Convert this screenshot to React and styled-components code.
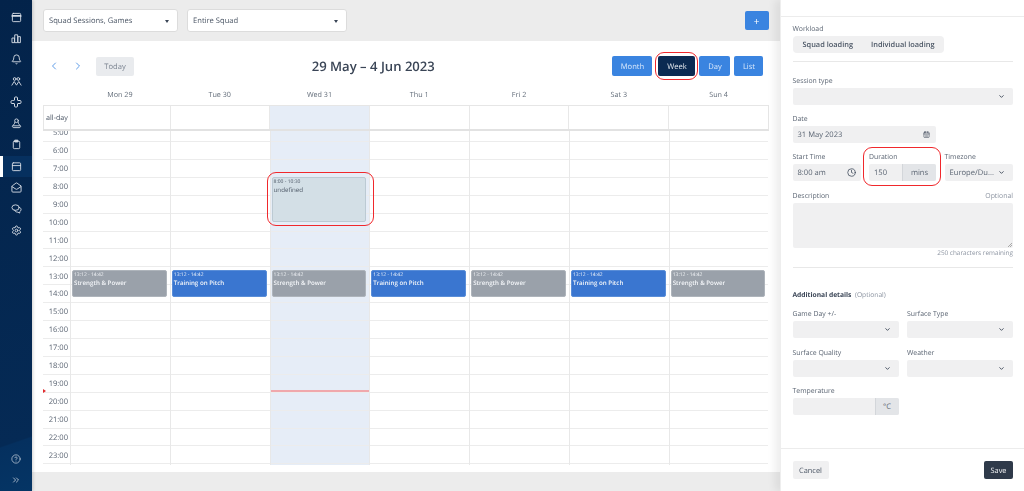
import React from "react";
import styled, { createGlobalStyle } from "styled-components";
import {
  Bell, Cross, MailOpen,
  Settings, CircleHelp, ChevronsRight, ChevronLeft, ChevronRight, ChevronDown, Clock, CalendarDays,
} from "lucide-react";

const Global = createGlobalStyle`
  html, body { margin: 0; padding: 0; height: 100%; background: #ececec; overflow: hidden; }
  body { font-family: "Open Sans", "Liberation Sans", sans-serif; color: #3a4556; text-rendering: geometricPrecision; }
  * { box-sizing: border-box; }
`;

const Page = styled.div`
  display: flex;
  width: 1024px;
  height: 491px;
  overflow: hidden;
  filter: blur(0.35px);
`;

/* ---------- sidebar ---------- */
const Sidebar = styled.nav`
  position: relative;
  flex: 0 0 32px;
  display: flex;
  flex-direction: column;
  padding-top: 6.5px;
  background: linear-gradient(161deg, #03234a 0%, #052a55 89%, #05305f 89.3%, #053565 100%);
  box-shadow: 1px 0 3px rgba(0, 0, 0, 0.18);
  z-index: 3;
`;
const NavItem = styled.div`
  height: 21.3px;
  display: flex;
  align-items: center;
  justify-content: center;
  color: #d5dce5;
  background: ${(p) => (p.$active ? "#06305f" : "transparent")};
  border-left: ${(p) => (p.$active ? "3px solid #fff" : "0")};
  padding-right: ${(p) => (p.$active ? "3px" : "0")};
`;
const NavFoot = styled.div`
  margin-top: auto;
`;
const NavIcon = styled.svg.attrs({ width: 11, height: 11, viewBox: "0 0 24 24", fill: "none", stroke: "currentColor", strokeWidth: 2, strokeLinejoin: "round", strokeLinecap: "round" })``;

/* ---------- main ---------- */
const Main = styled.main`
  flex: 1;
  display: flex;
  flex-direction: column;
  min-width: 0;
`;
const TopBar = styled.div`
  height: 41px;
  flex: none;
  display: flex;
  align-items: center;
  padding: 0 11px;
  gap: 9px;
`;
const FilterSelect = styled.div`
  width: ${(p) => p.$w}px;
  height: 23px;
  background: #fff;
  border: 1px solid #dcdcdc;
  border-radius: 3px;
  display: flex;
  align-items: center;
  justify-content: space-between;
  padding: 1px 8px 0 5px;
  font-size: 7.6px;
  color: #4a5564;
`;
const Caret = styled.span`
  width: 0;
  height: 0;
  border-left: 2.5px solid transparent;
  border-right: 2.5px solid transparent;
  border-top: 3px solid #3a4556;
`;
const AddButton = styled.div`
  margin-left: auto;
  width: 24px;
  height: 19px;
  border-radius: 2px;
  background: #3a84e0;
  color: #fff;
  display: flex;
  align-items: center;
  justify-content: center;
  font-size: 10px;
`;
const Card = styled.section`
  height: 431px;
  background: #fff;
  padding: 0 11px;
  display: flex;
  flex-direction: column;
`;
const Toolbar = styled.div`
  height: 47px;
  flex: none;
  display: flex;
  justify-content: space-between;
  align-items: center;
  padding-top: 3px;
`;
const ToolLeft = styled.div`
  display: flex;
  align-items: center;
  color: #5f9de8;
  padding-left: 5px;
`;
const ArrowSlot = styled.span`
  width: 24px;
  display: flex;
`;
const TodayButton = styled.div`
  width: 38px;
  height: 19px;
  padding-top: 1px;
  background: #e9ebee;
  border-radius: 2px;
  color: #7b8491;
  font-size: 7.6px;
  display: flex;
  align-items: center;
  justify-content: center;
`;
const Title = styled.h1`
  margin: 0;
  font-size: 13.1px;
  font-weight: 600;
  color: #3a4556;
  white-space: nowrap;
`;
const Views = styled.div`
  display: flex;
  justify-content: flex-end;
  gap: 4px;
  padding-right: 5px;
`;
const ViewButton = styled.div`
  position: relative;
  height: 20px;
  padding-top: 1px;
  width: ${(p) => p.$w}px;
  margin-left: ${(p) => p.$ml || 0}px;
  border-radius: 2px;
  background: ${(p) => (p.$active ? "#0b2a52" : "#3a84e0")};
  color: ${(p) => (p.$active ? "#e6eaf0" : "#dbe9fb")};
  font-size: 7.6px;
  display: flex;
  align-items: center;
  justify-content: center;
`;
const Mark = styled.span`
  position: absolute;
  left: ${(p) => p.$l}px;
  top: ${(p) => p.$t}px;
  width: ${(p) => p.$w}px;
  height: ${(p) => p.$h}px;
  border: 1.5px solid #f0282c;
  border-radius: 9px;
  pointer-events: none;
  z-index: 2;
`;

const DayHead = styled.div`
  display: grid;
  grid-template-columns: 27px repeat(7, 1fr);
  height: 17px;
  flex: none;
  font-size: 7.2px;
  color: #626c79;
  text-align: center;
  line-height: 14px;
`;
const AllDay = styled.div`
  display: grid;
  grid-template-columns: 27px repeat(7, 1fr);
  height: 26px;
  flex: none;
  border: 1px solid #e6e6e6;
  border-left-width: 0;
  border-bottom: 2px solid #e2e2e2;
`;
const AllDayLabel = styled.div`
  font-size: 7.2px;
  color: #4a5564;
  display: flex;
  align-items: center;
  justify-content: center;
  border-left: 1px solid #e6e6e6;
`;
const AllDayCell = styled.div`
  border-left: 1px solid #e8e8e8;
  background: ${(p) => (p.$today ? "#e6edf7" : "transparent")};
`;
const TimeGrid = styled.div`
  display: grid;
  grid-template-columns: 27px repeat(7, 1fr);
  flex: none;
  overflow: hidden;
  height: 333.5px;
  position: relative;
`;
const AxisColumn = styled.div`
  display: flex;
  flex-direction: column;
`;
const AxisSlot = styled.div`
  flex: none;
  height: ${(p) => p.$h}px;
  font-size: 7.6px;
  color: #5a6472;
  padding-right: 2px;
  padding-top: ${(p) => (p.$clip ? 0 : 1.5)}px;
  padding-bottom: ${(p) => (p.$clip ? 7 : 0)}px;
  border-bottom: 1px solid #ececec;
  display: flex;
  align-items: center;
  justify-content: flex-end;
  line-height: 10px;
  overflow: hidden;
`;
const DayColumn = styled.div`
  position: relative;
  border-left: 1px solid #e8e8e8;
  background: ${(p) => (p.$today ? "#e6edf7" : "transparent")};
`;
const Slot = styled.div`
  height: ${(p) => p.$h}px;
  border-bottom: 1px solid #ececec;
`;
const EventBox = styled.div`
  position: absolute;
  left: 1px;
  right: 3px;
  top: ${(p) => p.$t}px;
  height: ${(p) => p.$h}px;
  border-radius: 2px;
  padding: 0.5px 0 0 1px;
  background: ${(p) => p.$bg};
  border: 1px solid ${(p) => p.$line};
  color: ${(p) => p.$fg};
  overflow: hidden;
`;
const EventTime = styled.div`
  font-size: 5px;
  line-height: 6px;
  font-weight: 500;
`;
const EventName = styled.div`
  font-size: 6.2px;
  line-height: 9px;
  font-weight: ${(p) => (p.$bold ? 600 : 400)};
  white-space: nowrap;
`;
const NowLine = styled.div`
  position: absolute;
  left: 0;
  right: 0;
  top: 259px;
  height: 1.5px;
  background: #f0a8ac;
`;
const NowArrow = styled.span`
  position: absolute;
  left: 0;
  top: 258px;
  width: 0;
  height: 0;
  border-top: 2px solid transparent;
  border-bottom: 2px solid transparent;
  border-left: 3px solid #e02a2e;
`;
const CardFoot = styled.div`
  flex: 1;
`;

/* ---------- drawer ---------- */
const Drawer = styled.aside`
  position: relative;
  flex: 0 0 244px;
  background: #fff;
  box-shadow: -5px 0 8px rgba(0, 0, 0, 0.07);
  display: flex;
  flex-direction: column;
  z-index: 2;
  border-left: 1px solid #eee;
`;
const DrawerTop = styled.div`
  height: 17px;
  flex: none;
  border-bottom: 1px solid #ececec;
`;
const DrawerBody = styled.div`
  flex: 1;
  padding: 0 11px 0 12px;
  position: relative;
`;
const Label = styled.div`
  font-size: 6.9px;
  line-height: 9px;
  height: 9px;
  padding-top: 1px;
  font-weight: 500;
  color: #5b6573;
  margin-top: ${(p) => p.$mt || 0}px;
  margin-bottom: 3px;
  display: flex;
  justify-content: space-between;
  white-space: nowrap;
`;
const Optional = styled.span`
  font-weight: 400;
  color: #8b93a0;
`;
const Segmented = styled.div`
  width: 151px;
  height: 17px;
  padding-top: 1px;
  background: #f0f0f1;
  border-radius: 4px;
  display: flex;
  align-items: center;
  padding-left: 10px;
  gap: 18px;
  font-size: 7.4px;
  font-weight: 600;
  color: #4a5564;
  white-space: nowrap;
`;
const Rule = styled.div`
  height: 1px;
  background: #e8e8e8;
  margin-top: ${(p) => p.$mt}px;
`;
const Field = styled.div`
  height: 17.5px;
  width: ${(p) => (p.$w ? `${p.$w}px` : "100%")};
  background: #f0f0f1;
  border-radius: 2px;
  display: flex;
  align-items: center;
  justify-content: space-between;
  padding: 1px ${(p) => p.$pr ?? 8}px 0 5px;
  font-size: 7.6px;
  color: #5b6573;
  overflow: hidden;
  white-space: nowrap;
`;
const Row = styled.div`
  display: grid;
  grid-template-columns: ${(p) => p.$cols};
  column-gap: ${(p) => p.$gap}px;
`;
const FieldCell = styled.div`
  position: relative;
`;
const Unit = styled.span`
  align-self: stretch;
  width: ${(p) => p.$w}px;
  margin-top: -1px;
  background: #e3e5e8;
  border-left: 1px solid #d3d6da;
  display: flex;
  align-items: center;
  justify-content: center;
  padding-top: 1px;
  color: #5b6573;
`;
const TextArea = styled.div`
  position: relative;
  height: 45px;
  background: #f0f0f1;
  border-radius: 2px;
`;
const Grip = styled.svg`
  position: absolute;
  right: 1px;
  bottom: 1px;
`;
const Remaining = styled.div`
  font-size: 6.4px;
  line-height: 9px;
  margin-top: 0.5px;
  color: #8b93a0;
  text-align: right;
`;
const SectionTitle = styled.div`
  font-size: 6.7px;
  line-height: 9px;
  margin-top: 21.5px;
  margin-bottom: 10px;
  font-weight: 700;
  color: #3a4556;
`;
const DrawerFoot = styled.footer`
  height: 43px;
  flex: none;
  border-top: 1px solid #ececec;
  display: flex;
  align-items: flex-start;
  justify-content: space-between;
  padding: 12px 11px 0 12px;
`;
const FootButton = styled.div`
  height: 18px;
  padding-top: 1px;
  width: ${(p) => p.$w}px;
  border-radius: 2px;
  background: ${(p) => (p.$dark ? "#2f3a4a" : "#f0f0f1")};
  color: ${(p) => (p.$dark ? "#f2f3f5" : "#4a5564")};
  font-size: 7.4px;
  font-weight: 500;
  display: flex;
  align-items: center;
  justify-content: center;
`;

const navItems = [
  <NavIcon><rect x="3" y="3" width="18" height="18" rx="2" /><path d="M3 8.500h18" strokeWidth="4" /></NavIcon>,
  <NavIcon stroke="none" fill="currentColor"><rect x="3" y="11" width="4.500" height="10" /><rect x="9" y="4" width="5.500" height="17" /><rect x="16" y="8" width="4.500" height="13" /></NavIcon>,
  <Bell size={11} strokeWidth={2} />,
  <NavIcon><circle cx="8" cy="6.500" r="3" /><circle cx="16" cy="6.500" r="3" /><path d="M2 20l5-8 5 8 5-8 5 8" /></NavIcon>,
  <Cross size={12} strokeWidth={2} />,
  <NavIcon strokeWidth="2.400"><circle cx="12" cy="6" r="4" /><path d="M8 10c0 3-1 4-4 6-2 1.500-1 5 2 5h12c3 0 4-3.500 2-5-3-2-4-3-4-6" /><path d="M5 17h14" /></NavIcon>,
  <NavIcon><rect x="5" y="5" width="14" height="16" rx="2" /><rect x="9" y="2.500" width="6" height="4" fill="currentColor" /></NavIcon>,
  <NavIcon><rect x="3" y="4" width="18" height="17" rx="2" /><path d="M3 10h18" /></NavIcon>,
  <MailOpen size={11} strokeWidth={2} />,
  <NavIcon><ellipse cx="10" cy="10" rx="8" ry="6" /><path d="M8 16c1 3 4 4 7 4l4 2v-3c2-1 3-3 3-5s-1-3-3-4" /></NavIcon>,
  <Settings size={11} strokeWidth={2} />,
];

const days = ["Mon 29", "Tue 30", "Wed 31", "Thu 1", "Fri 2", "Sat 3", "Sun 4"];
const hours = Array.from({ length: 19 }, (_, i) => i + 5);
const slotH = (h) => (h === 5 ? 11 : 17.92);
const TOP_13 = 139;

const SelectField = ({ w }) => (
  <Field $w={w}><span /><ChevronDown size={7} strokeWidth={3} color="#3a4556" /></Field>
);

export default function App() {
  return (
    <Page>
      <Global />
      <Sidebar>
        {navItems.map((n, i) => <NavItem key={i} $active={i === 7}>{n}</NavItem>)}
        <NavFoot>
          <NavItem><CircleHelp size={10} strokeWidth={1.6} /></NavItem>
          <NavItem><ChevronsRight size={10} strokeWidth={1.8} /></NavItem>
        </NavFoot>
      </Sidebar>
      <Main>
        <TopBar>
          <FilterSelect $w={135}>Squad Sessions, Games<Caret /></FilterSelect>
          <FilterSelect $w={160}>Entire Squad<Caret /></FilterSelect>
          <AddButton>+</AddButton>
        </TopBar>
        <Card>
          <Toolbar>
            <ToolLeft>
              <ArrowSlot><ChevronLeft size={12} strokeWidth={2} /></ArrowSlot>
              <ArrowSlot><ChevronRight size={12} strokeWidth={2} /></ArrowSlot>
              <TodayButton>Today</TodayButton>
            </ToolLeft>
            <Title>29 May – 4 Jun 2023</Title>
            <Views>
              <ViewButton $w={40}>Month</ViewButton>
              <ViewButton $w={37} $ml={2} $active>
                Week
                <Mark $l={-3} $t={-4} $w={43} $h={28} />
              </ViewButton>
              <ViewButton $w={31}>Day</ViewButton>
              <ViewButton $w={29}>List</ViewButton>
            </Views>
          </Toolbar>
          <DayHead>
            <span />
            {days.map((d) => <span key={d}>{d}</span>)}
          </DayHead>
          <AllDay>
            <AllDayLabel>all-day</AllDayLabel>
            {days.map((d) => <AllDayCell key={d} $today={d === "Wed 31"} />)}
          </AllDay>
          <TimeGrid>
            <NowArrow />
            <AxisColumn>
              {hours.map((h) => (
                <AxisSlot key={h} $h={slotH(h)} $clip={h === 5}>{h}:00</AxisSlot>
              ))}
            </AxisColumn>
            {days.map((d, i) => (
              <DayColumn key={d} $today={i === 2}>
                {hours.map((h) => <Slot key={h} $h={slotH(h)} />)}
                <EventBox
                  $t={TOP_13}
                  $h={27}
                  $bg={i % 2 ? "#3a76d0" : "#9aa1aa"}
                  $line={i % 2 ? "#5a8ed8" : "#aeb4bb"}
                  $fg="#f4f6f9"
                >
                  <EventTime>13:12 - 14:42</EventTime>
                  <EventName $bold>{i % 2 ? "Training on Pitch" : "Strength & Power"}</EventName>
                </EventBox>
                {i === 2 && (
                  <>
                    <EventBox $t={46} $h={45} $bg="#d3dfe6" $line="#bccad3" $fg="#4f5a68">
                      <EventTime>8:00 - 10:30</EventTime>
                      <EventName>undefined</EventName>
                    </EventBox>
                    <Mark $l={-4} $t={41} $w={107} $h={54} />
                    <NowLine />
                  </>
                )}
              </DayColumn>
            ))}
          </TimeGrid>
          <CardFoot />
        </Card>
      </Main>
      <Drawer>
        <DrawerTop />
        <DrawerBody>
          <Label $mt={6.5}>Workload</Label>
          <Segmented><span>Squad loading</span><span>Individual loading</span></Segmented>
          <Rule $mt={8.5} />
          <Label $mt={13.5}>Session type</Label>
          <SelectField />
          <Label $mt={8.5}>Date</Label>
          <Field $w={143} $pr={6}>31 May 2023<CalendarDays size={7} strokeWidth={2} color="#3a4556" /></Field>
          <Row $cols="68px 67px 68px" $gap={8.5}>
            <FieldCell>
              <Label $mt={8.5}>Start Time</Label>
              <Field $pr={5}>8:00 am<Clock size={9} strokeWidth={2} color="#3a4556" /></Field>
            </FieldCell>
            <FieldCell>
              <Label $mt={8.5}>Duration</Label>
              <Field $pr={0}>150<Unit $w={34}>mins</Unit></Field>
              <Mark $l={-6} $t={4} $w={78} $h={39} />
            </FieldCell>
            <FieldCell>
              <Label $mt={8.5}>Timezone</Label>
              <Field>Europe/Du...<ChevronDown size={7} strokeWidth={3} color="#3a4556" /></Field>
            </FieldCell>
          </Row>
          <Label $mt={9.5}>Description<Optional>Optional</Optional></Label>
          <TextArea>
            <Grip width="5" height="5" viewBox="0 0 5 5"><path d="M1 5 5 1M3 5 5 3" stroke="#777" strokeWidth=".6" /></Grip>
          </TextArea>
          <Remaining>250 characters remaining</Remaining>
          <Rule $mt={10} />
          <SectionTitle>Additional details <Optional>&nbsp;(Optional)</Optional></SectionTitle>
          <Row $cols="106px 106px" $gap={8.5}>
            <FieldCell><Label>Game Day +/-</Label><SelectField /></FieldCell>
            <FieldCell><Label>Surface Type</Label><SelectField /></FieldCell>
            <FieldCell><Label $mt={9.5}>Surface Quality</Label><SelectField /></FieldCell>
            <FieldCell><Label $mt={9.5}>Weather</Label><SelectField /></FieldCell>
            <FieldCell>
              <Label $mt={8.5}>Temperature</Label>
              <Field $pr={0}><span /><Unit $w={24}>°C</Unit></Field>
            </FieldCell>
          </Row>
        </DrawerBody>
        <DrawerFoot>
          <FootButton $w={36}>Cancel</FootButton>
          <FootButton $w={29} $dark>Save</FootButton>
        </DrawerFoot>
      </Drawer>
    </Page>
  );
}
